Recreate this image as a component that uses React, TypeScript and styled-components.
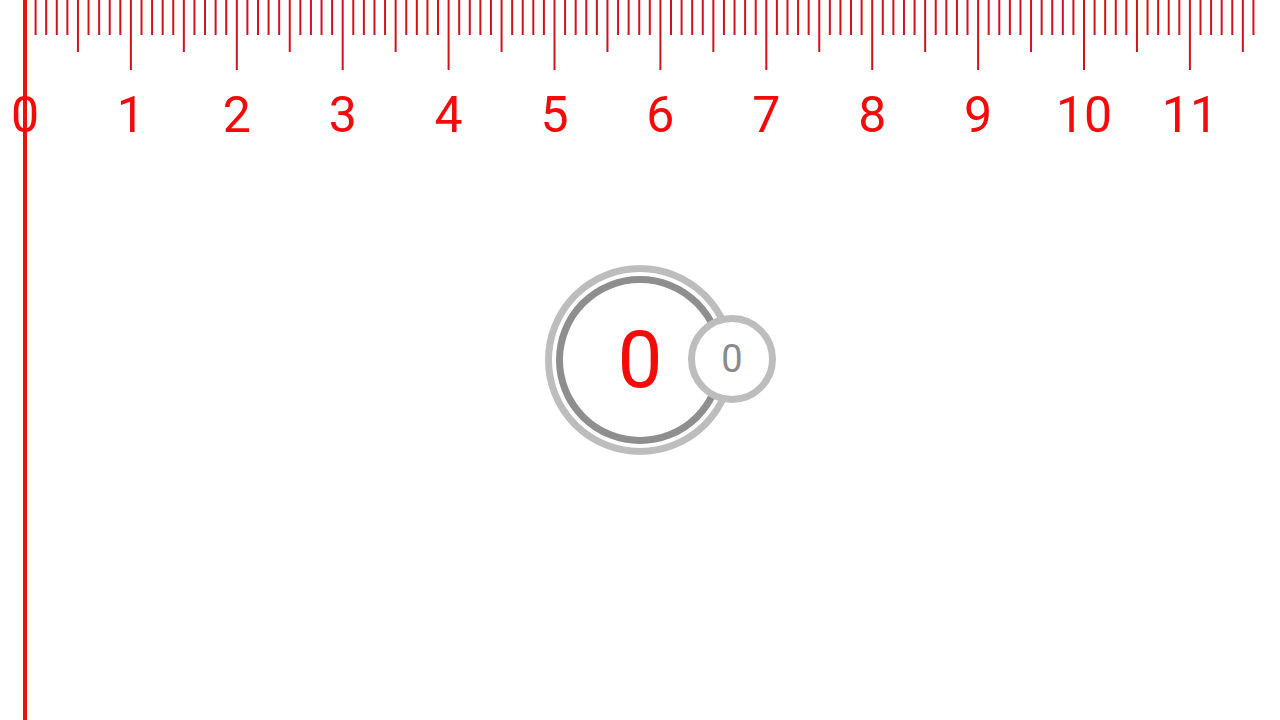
import * as React from 'react';
import styled, { createGlobalStyle } from 'styled-components';

const GlobalStyle = createGlobalStyle`
  html, body {
    margin: 0;
    padding: 0;
    background: #ffffff;
    font-family: Roboto, "Liberation Sans", sans-serif;
    overflow: hidden;
  }
`;

const UNIT = 105.9;
const ORIGIN = 25;
const TICKS = 116;

const Page = styled.div`
  position: relative;
  width: 100vw;
  height: 100vh;
  display: flex;
  align-items: center;
  justify-content: center;
`;

const RulerOverlay = styled.svg`
  position: absolute;
  top: 0;
  left: 0;
  width: 100%;
  height: 100%;
  pointer-events: none;
`;

const Stage = styled.div`
  position: relative;
  width: 190px;
  height: 190px;
`;

const Dial = styled.div`
  box-sizing: border-box;
  width: 100%;
  height: 100%;
  border: 7px solid #bdbdbd;
  border-radius: 50%;
  padding: 4px;
  display: flex;
`;

const Track = styled.div`
  box-sizing: border-box;
  flex: 1;
  border: 7px solid #8e8e8e;
  border-radius: 50%;
  display: flex;
  align-items: center;
  justify-content: center;
`;

interface ICount {
  size: number;
  color: string;
}

const Count = styled.span<ICount>`
  font-size: ${props => props.size}px;
  line-height: 1;
  color: ${props => props.color};
`;

const Badge = styled.div`
  box-sizing: border-box;
  position: absolute;
  left: 143px;
  top: 50px;
  width: 88px;
  height: 88px;
  border: 7px solid #bdbdbd;
  border-radius: 50%;
  background: #ffffff;
  display: flex;
  align-items: center;
  justify-content: center;
`;

function Ruler() {
  const ticks = [];
  for (let i = 0; i <= TICKS; i++) {
    const x = ORIGIN + (i * UNIT) / 10;
    const len = i % 10 === 0 ? 70 : i % 5 === 0 ? 52 : 35;
    ticks.push(<line key={i} x1={x} x2={x} y1={0} y2={len} stroke="#d0121e" strokeWidth={2} />);
  }
  const labels = [];
  for (let n = 0; n <= 11; n++) {
    labels.push(
      <text
        key={n}
        x={ORIGIN + n * UNIT}
        y={132}
        textAnchor="middle"
        fontFamily="Roboto, 'Liberation Sans', sans-serif"
        fontSize={50}
        fill="#f50a0a"
      >
        {n}
      </text>
    );
  }
  return (
    <RulerOverlay>
      {ticks}
      <rect x={23} y={0} width={4} height={720} fill="#ec1111" />
      {labels}
    </RulerOverlay>
  );
}

export default function App() {
  return (
    <Page>
      <GlobalStyle />
      <Stage>
        <Dial>
          <Track>
            <Count size={80} color="#f50a0a">0</Count>
          </Track>
        </Dial>
        <Badge>
          <Count size={38} color="#8a8a8a">0</Count>
        </Badge>
      </Stage>
      <Ruler />
    </Page>
  );
}
